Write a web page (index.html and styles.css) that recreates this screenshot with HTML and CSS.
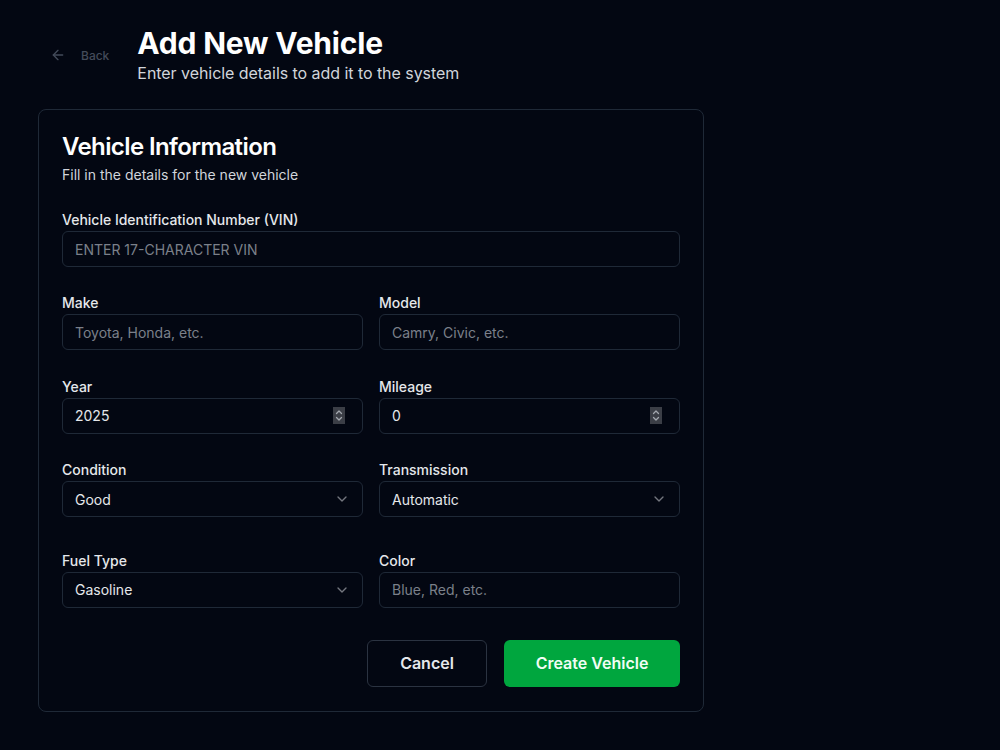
FILE: index.html
```html
<!DOCTYPE html>
<html lang="en">
<head>
    <meta charset="UTF-8" />
    <title>Add New Vehicle</title>
    <link rel="stylesheet" href="styles.css">
</head>
<body>

    <main class="pagina">
        <header class="cabecera">
            <button class="volver" type="button">
                <svg width="16" height="16" viewBox="0 0 24 24" fill="none" stroke="currentColor" stroke-width="2" stroke-linecap="round" stroke-linejoin="round"><path d="M12 19l-7-7 7-7"/><path d="M19 12H5"/></svg>
                <span>Back</span>
            </button>
            <div>
                <h1>Add New Vehicle</h1>
                <p>Enter vehicle details to add it to the system</p>
            </div>
        </header>

        <section class="tarjeta">
            <div class="tarjeta-cabecera">
                <h2>Vehicle Information</h2>
                <p>Fill in the details for the new vehicle</p>
            </div>

            <form class="formulario" onsubmit="return false">
                <div class="campo ancho">
                    <label>Vehicle Identification Number (VIN)</label>
                    <input class="mayus" type="text" placeholder="Enter 17-character VIN" />
                </div>

                <div class="campo">
                    <label>Make</label>
                    <input type="text" placeholder="Toyota, Honda, etc." />
                </div>
                <div class="campo">
                    <label>Model</label>
                    <input type="text" placeholder="Camry, Civic, etc." />
                </div>

                <div class="campo">
                    <label>Year</label>
                    <div class="numero">
                        <input type="text" value="2025" />
                        <span class="giro">
                            <svg width="8" height="13" viewBox="0 0 8 13" fill="none" stroke="currentColor" stroke-width="1.3" stroke-linecap="round" stroke-linejoin="round"><path d="M1.5 4.5L4 2l2.5 2.5"/><path d="M1.5 8.5L4 11l2.5-2.5"/></svg>
                        </span>
                    </div>
                </div>
                <div class="campo">
                    <label>Mileage</label>
                    <div class="numero">
                        <input type="text" value="0" />
                        <span class="giro">
                            <svg width="8" height="13" viewBox="0 0 8 13" fill="none" stroke="currentColor" stroke-width="1.3" stroke-linecap="round" stroke-linejoin="round"><path d="M1.5 4.5L4 2l2.5 2.5"/><path d="M1.5 8.5L4 11l2.5-2.5"/></svg>
                        </span>
                    </div>
                </div>

                <div class="campo">
                    <label>Condition</label>
                    <button class="selector" type="button">
                        <span>Good</span>
                        <svg width="16" height="16" viewBox="0 0 24 24" fill="none" stroke="currentColor" stroke-width="2" stroke-linecap="round" stroke-linejoin="round"><path d="M6 9l6 6 6-6"/></svg>
                    </button>
                </div>
                <div class="campo">
                    <label>Transmission</label>
                    <button class="selector" type="button">
                        <span>Automatic</span>
                        <svg width="16" height="16" viewBox="0 0 24 24" fill="none" stroke="currentColor" stroke-width="2" stroke-linecap="round" stroke-linejoin="round"><path d="M6 9l6 6 6-6"/></svg>
                    </button>
                </div>

                <div class="campo separado">
                    <label>Fuel Type</label>
                    <button class="selector" type="button">
                        <span>Gasoline</span>
                        <svg width="16" height="16" viewBox="0 0 24 24" fill="none" stroke="currentColor" stroke-width="2" stroke-linecap="round" stroke-linejoin="round"><path d="M6 9l6 6 6-6"/></svg>
                    </button>
                </div>
                <div class="campo separado">
                    <label>Color</label>
                    <input type="text" placeholder="Blue, Red, etc." />
                </div>

                <div class="acciones ancho">
                    <button class="cancelar" type="button">Cancel</button>
                    <button class="crear" type="submit">Create Vehicle</button>
                </div>
            </form>
        </section>
    </main>

</body>
</html>
```

FILE: styles.css
```css
body {
    margin: 0;
    background-color: #030712;
    color: #e5e7eb;
    font-family: Inter, "Noto Sans", sans-serif;
    color-scheme: dark;
}

.pagina {
    padding: 25px 38px;
}

.cabecera {
    display: flex;
    align-items: center;
    gap: 17px;
    margin-bottom: 24px;
}

.volver {
    display: flex;
    align-items: center;
    gap: 15px;
    height: 36px;
    padding: 0 11px 0 12px;
    border: none;
    background: none;
    color: #434b5a;
    font-family: inherit;
    font-size: 12px;
    font-weight: 500;
    cursor: pointer;
}

.cabecera h1 {
    margin: 0;
    font-size: 30px;
    line-height: 36px;
    font-weight: 700;
    letter-spacing: -0.2px;
    color: #ffffff;
}

.cabecera p {
    margin: 0;
    font-size: 16px;
    line-height: 24px;
    letter-spacing: -0.05px;
    color: #d1d5db;
}

.tarjeta {
    width: 666px;
    box-sizing: border-box;
    border: 1px solid #1f2937;
    border-radius: 8px;
    padding: 25px 23px 24px;
}

.tarjeta-cabecera h2 {
    margin: 0;
    font-size: 24px;
    line-height: 24px;
    font-weight: 600;
    letter-spacing: -0.6px;
    color: #ffffff;
}

.tarjeta-cabecera p {
    margin: 6px 0 0;
    font-size: 14px;
    line-height: 20px;
    color: #d1d5db;
}

.formulario {
    display: grid;
    grid-template-columns: 1fr 1fr;
    column-gap: 16px;
    row-gap: 26.4px;
    margin-top: 25px;
}

.campo {
    display: flex;
    flex-direction: column;
    gap: 1px;
    min-width: 0;
}

.ancho {
    grid-column: span 2;
}

.separado {
    margin-top: 7px;
}

label {
    font-size: 14px;
    line-height: 20px;
    font-weight: 500;
    color: #e5e7eb;
}

input,
.selector,
.numero {
    width: 100%;
    height: 36px;
    box-sizing: border-box;
    padding: 0 12px;
    border: 1px solid #1f2937;
    border-radius: 6px;
    background: transparent;
    color: #e5e7eb;
    font-family: inherit;
    font-size: 14px;
    outline: none;
}

input::placeholder {
    color: #7b808a;
}

.mayus {
    text-transform: uppercase;
}

.numero {
    display: flex;
    align-items: center;
    gap: 8px;
}

.numero input {
    flex: 1;
    height: 100%;
    padding: 0;
    border: none;
    border-radius: 0;
    min-width: 0;
}

.giro {
    display: flex;
    align-items: center;
    justify-content: center;
    width: 12px;
    height: 17px;
    margin-right: 5px;
    background-color: #3b3e46;
    color: #a3a7ae;
}

.selector {
    display: flex;
    align-items: center;
    justify-content: space-between;
    text-align: left;
    cursor: pointer;
}

.selector svg {
    opacity: 0.5;
}

.acciones {
    display: flex;
    justify-content: flex-end;
    gap: 17px;
    margin-top: 6px;
}

.acciones button {
    height: 47px;
    padding: 0;
    border-radius: 6px;
    font-family: inherit;
    font-size: 16px;
    font-weight: 600;
    white-space: nowrap;
    cursor: pointer;
}

.cancelar {
    width: 120px;
    background: transparent;
    border: 1px solid #2b3341;
    color: #e5e7eb;
}

.crear {
    width: 176px;
    background-color: #00a63e;
    border: none;
    color: #f0fdf4;
}
```
